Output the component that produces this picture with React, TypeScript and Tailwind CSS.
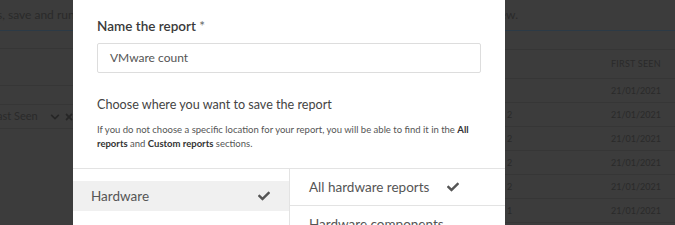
import React from 'react';
import { FaCheck, FaChevronDown, FaTimes } from 'react-icons/fa';

const dates = ['', '2', '2', '2', '2', '1'];

const Backdrop: React.FC = () => {
  return (
    <div className="flex flex-col w-full h-full bg-[#3c3c3c] text-[#2a2a2a]">
      <div className="h-[31px] shrink-0 flex items-center justify-between border-b border-[#2c3a46] text-[12px]">
        <span className="-ml-[3px] whitespace-nowrap">s, save and run reports</span>
        <span className="mr-[157px] whitespace-nowrap">view.</span>
      </div>
      <div className="flex flex-1">
        <div className="w-[505px] shrink-0 flex flex-col">
          <div className="h-[18px] border-b border-[#363636]" />
          <div className="h-[37px] border-b border-[#363636]" />
          <div className="h-[19px] border-b border-[#363636]" />
          <div className="h-[24px] border-b border-[#363636] flex items-center text-[11px] whitespace-nowrap">
            <span className="-ml-[3px]">ast Seen</span>
            <FaChevronDown className="ml-[12px] w-[10px] h-[10px] text-[#262626]" />
            <FaTimes className="ml-[4px] w-[10px] h-[10px] text-[#262626]" />
          </div>
        </div>
        <div className="flex-1 flex flex-col">
          <div className="h-[19px] border-b border-[#363636]" />
          <div className="h-[29px] border-b border-[#363636] flex items-center pl-[106px] text-[9px] tracking-wide">FIRST SEEN</div>
          {dates.map((d, i) => (
            <div key={i} className="h-[24px] shrink-0 border-b border-[#363636] flex items-center text-[9px]">
              <span className="w-[106px] pl-[2px]">{d}</span>
              <span>21/01/2021</span>
            </div>
          ))}
        </div>
      </div>
    </div>
  );
};

export default function App() {
  return (
    <div className="relative w-[675px] h-[225px] overflow-hidden" style={{ fontFamily: 'Lato, "Noto Sans", sans-serif' }}>
      <Backdrop />
      <div className="absolute left-[73px] top-0 w-[432px] h-full bg-white flex flex-col">
        <div className="px-6 pt-[16px]">
          <div className="text-[13.5px] leading-5 font-semibold text-[#3a3a3a]">
            Name the report <span className="font-normal text-[#666]">*</span>
          </div>
          <div className="mt-[7px] h-[30px] border border-[#dddddd] rounded-[2px] flex items-center px-[12px] text-[12px] text-[#555]">
            VMware count
          </div>
          <div className="mt-[22px] text-[12.6px] leading-5 text-[#444]">Choose where you want to save the report</div>
          <p className="mt-[8px] text-[9.5px] leading-[14px] text-[#555]">
            If you do not choose a specific location for your report, you will be able to find it in the <b className="text-[#333]">All reports</b> and <b className="text-[#333]">Custom reports</b> sections.
          </p>
        </div>
        <div className="mt-[17px] flex flex-1 border-t border-[#e3e3e3]">
          <div className="w-[216px] shrink-0 pt-[12px]">
            <div className="h-[30px] bg-[#f0f0f0] flex items-center justify-between pl-[18px] pr-[19px] text-[13.5px] text-[#555]">
              <span>Hardware</span>
              <FaCheck className="w-[12px] h-[12px] text-[#555]" />
            </div>
          </div>
          <div className="flex-1 border-l border-[#e3e3e3]">
            <div className="h-[37px] border-b border-[#e3e3e3] flex items-center justify-between pl-[19px] pr-[46px] text-[13.5px] text-[#555]">
              <span>All hardware reports</span>
              <FaCheck className="w-[12px] h-[12px] text-[#555]" />
            </div>
            <div className="h-[37px] flex items-center pl-[19px] text-[13.5px] text-[#555]">Hardware components</div>
          </div>
        </div>
      </div>
    </div>
  );
}
